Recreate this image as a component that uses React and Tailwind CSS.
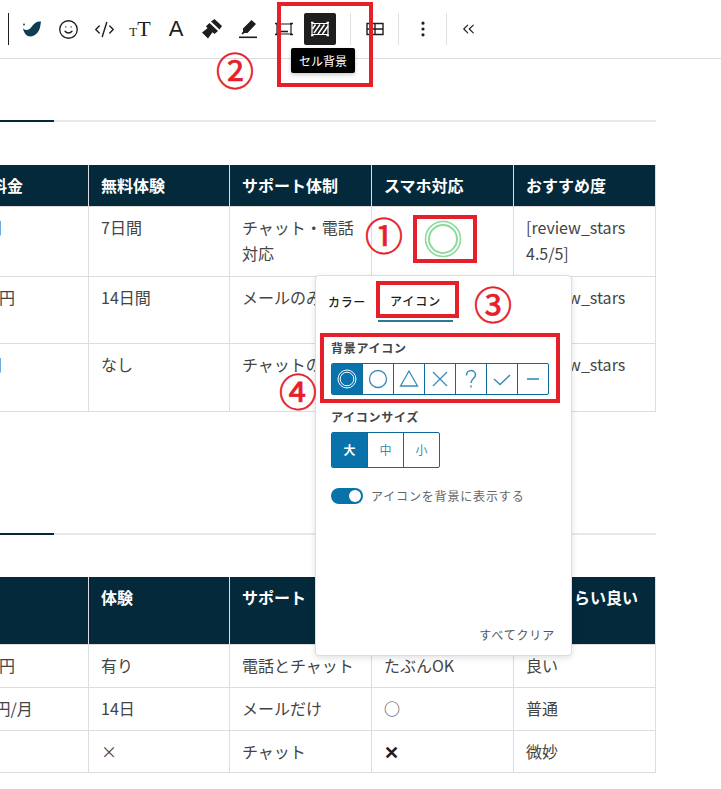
import { Smile, CodeXml, ChevronsLeft, EllipsisVertical } from 'lucide-react';

const jp = 'font-["Noto_Sans_CJK_JP","Noto_Sans",sans-serif]';

const BirdIcon = () => (
  <svg width="20" height="16" viewBox="0 0 20 16">
    <path d="M1 7.5C4 10 7 9.5 9.5 6C12 2 15 0 19 .5C18.6 2 18.7 3.5 18 6.5C16.5 12 12.5 15.5 8.5 15.5C4.5 15.5 2 12 1 7.5Z" fill="#0c3d52" />
    <circle cx="2" cy="3.5" r="0.9" fill="#0c3d52" />
  </svg>
);

const BrushIcon = () => (
  <svg width="22" height="22" viewBox="0 0 22 22" fill="#1e1e1e">
    <path d="M10 3.5L13.5 1L21 8L18.5 11.5Z" />
    <path d="M8.5 5L17 13L13.5 16L11.5 14.2L7 20.5L1 14.5L6.5 10.2L5 8.2Z" />
  </svg>
);

const PenIcon = () => (
  <svg width="20" height="20" viewBox="0 0 20 20" fill="#1e1e1e">
    <path d="M13.5 1L18 5L9.5 14H6.5L4.5 15.5L3.5 14.5L5 12.5V9.5Z" />
    <rect x="1" y="17.5" width="18" height="1.6" />
  </svg>
);

const CellBorderIcon = () => (
  <svg width="20" height="16" viewBox="0 0 20 16" fill="none" stroke="#1e1e1e">
    <path d="M2 3H18M2 13H18M3 3V13M17 3V13" strokeWidth="1.2" />
    <path d="M7 10.5H14" strokeWidth="1.6" />
    <path d="M1 2.5H4M16 2.5H19M1 13.5H4M16 13.5H19" strokeWidth="1.6" />
  </svg>
);

const CellBgIcon = () => (
  <svg width="20" height="16" viewBox="0 0 20 16" fill="none" stroke="#fff">
    <path d="M2 2.5H18V13.5H2Z" strokeWidth="1.2" />
    <path d="M4 12L10 3.5M8 13L14.5 3.5M12.5 13L18 5M2.5 8L5.5 3.5" strokeWidth="1.5" />
    <path d="M1 1.5H3.5M16.5 1.5H19M1 14.5H3.5M16.5 14.5H19" strokeWidth="1.6" />
  </svg>
);

const TableIcon = () => (
  <svg width="18" height="14" viewBox="0 0 18 14" fill="none" stroke="#1e1e1e" strokeWidth="1.4">
    <path d="M1 1.5H17V12.5H1ZM1 7H17M9 1.5V12.5" />
  </svg>
);

const TabIcon = ({ children }) => (
  <svg width="20" height="20" viewBox="0 0 20 20" fill="none" strokeWidth="1.3">
    {children}
  </svg>
);

const bgIcons = [
  <><circle cx="10" cy="10" r="9" strokeWidth="1" /><circle cx="10" cy="10" r="6.8" strokeWidth="1" /></>,
  <circle cx="10" cy="10" r="8.5" />,
  <path d="M10 2L18.5 17H1.5Z" />,
  <path d="M3 3L17 17M17 3L3 17" />,
  <path d="M5.5 6.5C5.5 3.5 7.5 1.5 10 1.5C12.5 1.5 14.5 3.3 14.5 5.8C14.5 9.5 10 9.5 10 14M10 16.5V18.5" strokeWidth="1.5" />,
  <path d="M2 10L8 15.5L18 6" strokeWidth="1.5" />,
];

const Divider = ({ className = 'ml-[12px]' }) => <div className={`mr-[12px] h-[32px] w-px bg-[#e0e0e0] ${className}`} />;

const ToolSlot = ({ children, className = 'w-[36px]' }) => (
  <div className={`flex h-[32px] shrink-0 items-center justify-center ${className}`}>{children}</div>
);

const Toolbar = () => (
  <div className="flex h-[59px] items-center border-b border-[#dddddd] pl-[8px]">
    <div className="mr-[5px] h-[32px] w-px bg-[#1e1e1e]" />
    <ToolSlot><BirdIcon /></ToolSlot>
    <ToolSlot><Smile size={21} strokeWidth={1.5} color="#1e1e1e" /></ToolSlot>
    <ToolSlot><CodeXml size={21} strokeWidth={1.6} color="#1e1e1e" /></ToolSlot>
    <ToolSlot>
      <span className='font-["Liberation_Serif",serif] leading-none text-[#1e1e1e]'>
        <span className="text-[13px]">T</span><span className="text-[22px]">T</span>
      </span>
    </ToolSlot>
    <ToolSlot>
      <span className='font-["Liberation_Sans",sans-serif] text-[22px] leading-none text-[#1e1e1e]'>A</span>
    </ToolSlot>
    <ToolSlot><BrushIcon /></ToolSlot>
    <ToolSlot><PenIcon /></ToolSlot>
    <ToolSlot><CellBorderIcon /></ToolSlot>
    <ToolSlot className="ml-[2px] w-[32px] rounded-[2px] bg-[#1e1e1e]"><CellBgIcon /></ToolSlot>
    <Divider className="ml-[14px]" />
    <ToolSlot className="w-[23px]"><TableIcon /></ToolSlot>
    <Divider />
    <ToolSlot className="w-[23px]"><EllipsisVertical size={20} strokeWidth={1.8} color="#1e1e1e" /></ToolSlot>
    <Divider />
    <ToolSlot className="w-[19px]"><ChevronsLeft size={22} strokeWidth={1.4} color="#1e1e1e" /></ToolSlot>
  </div>
);

const SectionRule = ({ className }) => (
  <div className={`h-[2px] w-[656px] bg-[#e8e8e8] ${className}`}>
    <div className="h-[2px] w-[54px] bg-[#04293a]" />
  </div>
);

const DoubleCircle = () => (
  <svg width="38" height="38" viewBox="0 0 38 38" fill="none" stroke="#8bdc98" className="mx-auto mt-[6px]" strokeWidth="1.6">
    <circle cx="19" cy="19" r="17.5" />
    <circle cx="19" cy="19" r="14" strokeWidth="2" />
  </svg>
);

const CompareTable = ({ head, rows, heights, className }) => (
  <table className={`ml-[-54px] w-[709px] table-fixed border-collapse text-[16px] leading-[26px] ${className}`}>
    <colgroup>
      <col className="w-[142px]" />
      <col className="w-[141px]" />
      <col className="w-[142px]" />
      <col className="w-[142px]" />
      <col className="w-[142px]" />
    </colgroup>
    <thead>
      <tr style={{ height: heights[0] }}>
        {head.map((text, i) => (
          <th key={i} className="border border-[#dddddd] border-t-[#04293a] bg-[#04293a] px-[12px] pt-[6px] text-left align-top font-bold whitespace-pre-line text-white">
            {text}
          </th>
        ))}
      </tr>
    </thead>
    <tbody>
      {rows.map((row, r) => (
        <tr key={r} style={{ height: heights[r + 1] }}>
          {row.map((cell, c) => (
            <td key={c} className="border border-[#dddddd] px-[12px] pt-[7px] align-top text-[#444444]">
              {cell}
            </td>
          ))}
        </tr>
      ))}
    </tbody>
  </table>
);

const Popover = () => (
  <div className="absolute top-[275px] left-[315px] flex h-[381px] w-[257px] flex-col rounded-[4px] border border-[#dddddd] bg-white pt-[5px] shadow-[0_2px_6px_rgba(0,0,0,0.12)]">
    <div className="flex text-[12px] font-medium tracking-[0.05em] text-[#1e1e1e]">
      <div className="flex h-[41px] w-[62px] items-center justify-center">カラー</div>
      <div className="flex h-[41px] w-[75px] items-center justify-center border-b-2 border-[#2a7a97] tracking-[0.08em]">アイコン</div>
    </div>
    <div className="mt-[17px] pl-[15px] text-[12px] leading-[18px] font-bold tracking-[0.06em] text-[#444444]">背景アイコン</div>
    <div className="mt-[6px] ml-[15px] flex h-[32px] w-[218px] overflow-hidden rounded-[2px] border border-[#0b6a9a]">
      {bgIcons.map((icon, i) => (
        <div key={i} className={`flex flex-1 items-center justify-center border-r border-[#0b6a9a] ${i === 0 ? 'bg-[#0a72ab] stroke-white' : 'stroke-[#3a8bb5]'}`}>
          <TabIcon>{icon}</TabIcon>
        </div>
      ))}
      <div className="flex flex-1 items-center justify-center">
        <div className="h-[2px] w-[12px] bg-[#5ba3c9]" />
      </div>
    </div>
    <div className="mt-[13px] pl-[15px] text-[12px] leading-[18px] font-bold tracking-[0.06em] text-[#444444]">アイコンサイズ</div>
    <div className="mt-[6px] ml-[15px] flex h-[36px] w-[109px] overflow-hidden rounded-[2px] border border-[#0b6a9a] text-[12px]">
      <div className="flex flex-1 items-center justify-center border-r border-[#0b6a9a] bg-[#0a72ab] font-bold text-white">大</div>
      <div className="flex flex-1 items-center justify-center border-r border-[#0b6a9a] text-[#3a8bb5]">中</div>
      <div className="flex flex-1 items-center justify-center text-[#3a8bb5]">小</div>
    </div>
    <div className="mt-[20px] ml-[15px] flex h-[16px] items-center">
      <div className="flex h-[16px] w-[32px] items-center justify-end rounded-full bg-[#0a72ab] pr-[2px]">
        <div className="h-[12px] w-[12px] rounded-full bg-white" />
      </div>
      <span className="ml-[8px] text-[12px] tracking-[0.07em] text-[#666666]">アイコンを背景に表示する</span>
    </div>
    <div className="mt-auto mr-[16px] mb-[11px] text-right text-[12px] leading-[18px] tracking-[0.07em] text-[#555555]">すべてクリア</div>
  </div>
);

const firstHead = ['月額料金', '無料体験', 'サポート体制', 'スマホ対応', 'おすすめ度'];
const firstRows = [
  ['980円', '7日間', 'チャット・電話対応', <DoubleCircle />, '[review_stars 4.5/5]'],
  ['2,980円', '14日間', 'メールのみ', '', '[review_stars 4/5]'],
  ['980円', 'なし', 'チャットのみ', '', '[review_stars 3/5]'],
];
const secondHead = ['', '体験', 'サポート', 'スマホで使えるか', 'どのくらい良い'];
const secondRows = [
  ['1,980円', '有り', '電話とチャット', 'たぶんOK', '良い'],
  ['1000円/月', '14日', 'メールだけ', '○', '普通'],
  ['2,980', '×', 'チャット', <span className="text-[18px] font-bold text-[#1e1e1e]">✕</span>, '微妙'],
];

const redBox = 'absolute border-4 border-[#e5202a]';
const circled = 'absolute text-[38px] leading-none text-[#e5202a] [-webkit-text-stroke:0.7px_#e5202a]';

export default function App() {
  return (
    <div className={`relative h-[789px] w-[721px] overflow-hidden bg-white ${jp}`}>
      <Toolbar />
      <SectionRule className="mt-[61px]" />
      <CompareTable className="mt-[43px]" head={firstHead} rows={firstRows} heights={[41, 70, 67, 68]} />
      <SectionRule className="mt-[121px]" />
      <CompareTable className="mt-[42px]" head={secondHead} rows={secondRows} heights={[67, 43, 43, 42]} />

      <Popover />

      <div className="absolute top-[48px] left-[291px] flex h-[25px] w-[64px] items-center justify-center rounded-[2px] bg-black text-[12px] text-white shadow-[0_2px_4px_rgba(0,0,0,0.2)]">
        セル背景
      </div>

      <div className={`${redBox} top-[2px] left-[277px] h-[85px] w-[96px]`} />
      <div className={`${redBox} top-[215px] left-[413px] h-[48px] w-[64px]`} />
      <div className={`${redBox} top-[281px] left-[376px] h-[37px] w-[83px]`} />
      <div className={`${redBox} top-[333px] left-[320px] h-[70px] w-[240px]`} />

      <span className={`${circled} top-[215px] left-[365px]`}>①</span>
      <span className={`${circled} top-[50px] left-[216px]`}>②</span>
      <span className={`${circled} top-[284px] left-[474px]`}>③</span>
      <span className={`${circled} top-[371px] left-[279px]`}>④</span>
    </div>
  );
}
